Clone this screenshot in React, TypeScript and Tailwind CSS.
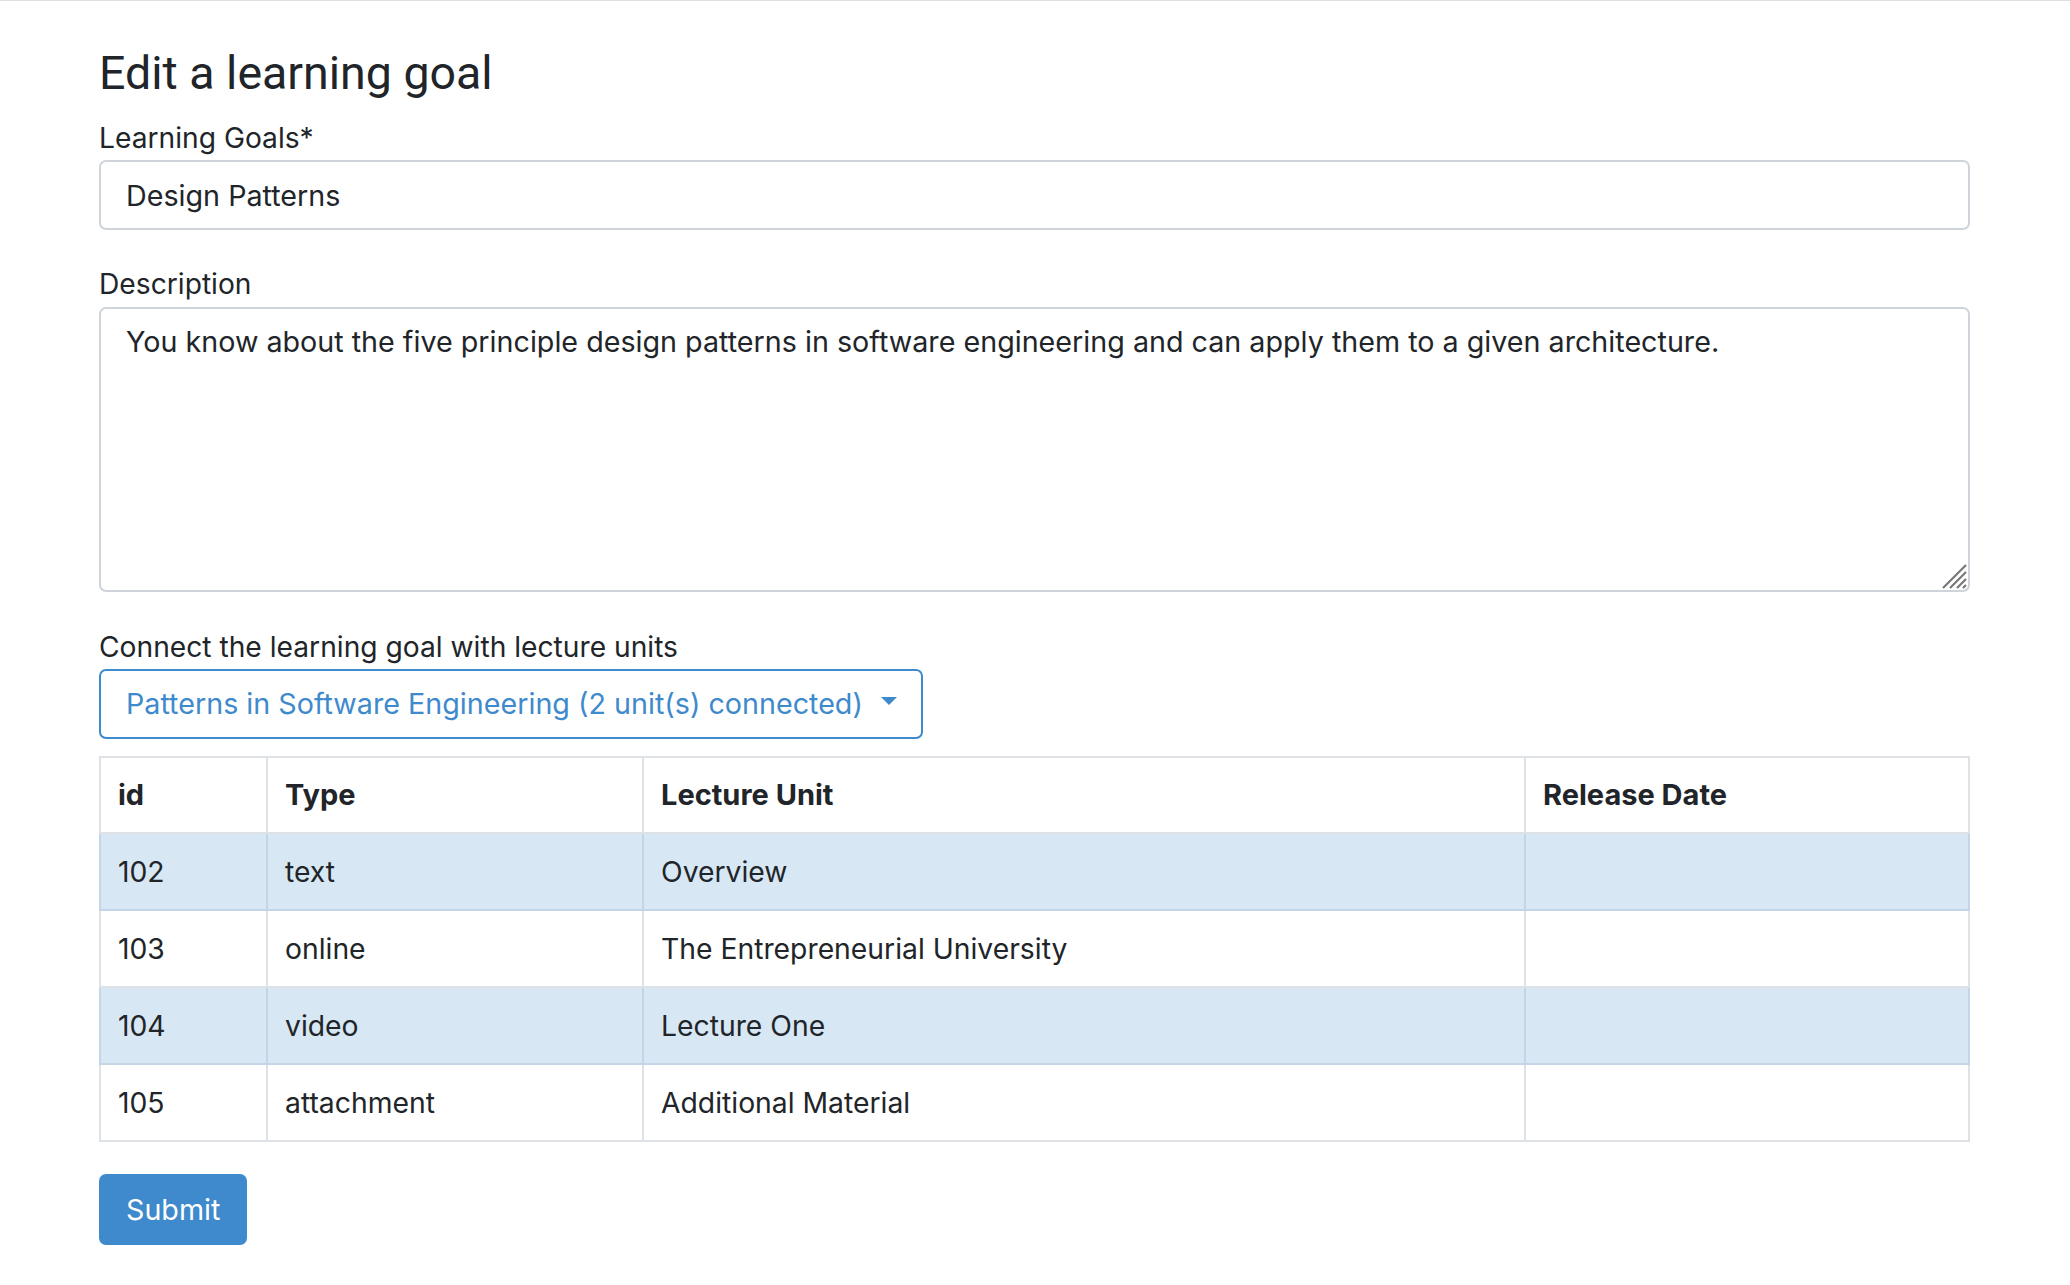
import React from "react";

const rows = [
  { id: "102", type: "text", unit: "Overview", hl: true },
  { id: "103", type: "online", unit: "The Entrepreneurial University", hl: false },
  { id: "104", type: "video", unit: "Lecture One", hl: true },
  { id: "105", type: "attachment", unit: "Additional Material", hl: false },
];

export default function App() {
  const body = { fontFamily: "Inter, 'Noto Sans', 'Liberation Sans', sans-serif" };
  return (
    <div className="min-h-[1285px] w-full bg-white border-t border-[#dcdfe3] text-[#212529]" style={body}>
      <div className="pl-[99px] pr-[100px] pt-[44px] pb-[40px]">
        <h2
          className="text-[46.5px] leading-[56px] font-normal text-[#212529]"
          style={{ fontFamily: "Roboto, 'Liberation Sans', sans-serif" }}
        >
          Edit a learning goal
        </h2>

        <label className="block mt-[19px] text-[28.2px] leading-[36px]">Learning Goals*</label>
        <input
          className="mt-[4px] block w-full h-[70px] rounded-[7px] border-2 border-[#ced4da] bg-white px-[25px] text-[28.7px] leading-[36px] text-[#212529] outline-none"
          style={body}
          defaultValue="Design Patterns"
        />

        <label className="block mt-[36px] text-[28.2px] leading-[36px]">Description</label>
        <div className="relative mt-[5px]">
          <textarea
            className="block w-full h-[285px] resize-none rounded-[7px] border-2 border-[#ced4da] bg-white px-[25px] pt-[15px] text-[28.7px] leading-[36px] text-[#212529] outline-none"
            style={body}
            defaultValue="You know about the five principle design patterns in software engineering and can apply them to a given architecture."
          />
          <svg className="absolute right-[3px] bottom-[3px]" width="26" height="26" viewBox="0 0 26 26">
            <line x1="2" y1="25" x2="25" y2="2" stroke="#777777" strokeWidth="2.2" />
            <line x1="9" y1="25" x2="25" y2="9" stroke="#777777" strokeWidth="2.2" />
            <line x1="16" y1="25" x2="25" y2="16" stroke="#777777" strokeWidth="2.2" />
            <line x1="22" y1="25" x2="25" y2="22" stroke="#777777" strokeWidth="2.2" />
          </svg>
        </div>

        <label className="block mt-[37px] text-[28.2px] leading-[36px]">Connect the learning goal with lecture units</label>
        <button
          type="button"
          className="mt-[4px] flex items-center h-[70px] rounded-[7px] border-2 border-[#3e8acc] bg-white pl-[25px] pr-[24px] text-[28.7px] leading-[36px] text-[#3e8acc]"
          style={body}
        >
          <span>Patterns in Software Engineering (2 unit(s) connected)</span>
          <svg className="ml-[18px] mt-[-6px]" width="16" height="8" viewBox="0 0 16 8">
            <polygon points="0,0 16,0 8,8" fill="#3e8acc" />
          </svg>
        </button>

        <table className="mt-[17px] w-full border-collapse text-[28.3px] leading-[36px]">
          <colgroup>
            <col className="w-[167px]" />
            <col className="w-[376px]" />
            <col className="w-[882px]" />
            <col />
          </colgroup>
          <thead>
            <tr className="h-[76px]">
              {["id", "Type", "Lecture Unit", "Release Date"].map((h) => (
                <th key={h} className="border-2 border-[#dee2e6] px-[17px] text-left text-[29px] font-bold align-middle">
                  {h}
                </th>
              ))}
            </tr>
          </thead>
          <tbody>
            {rows.map((r) => (
              <tr key={r.id} className={r.hl ? "h-[77px] bg-[#d8e7f4]" : "h-[77px] bg-white"}>
                {[r.id, r.type, r.unit, ""].map((c, i) => (
                  <td
                    key={i}
                    className={
                      r.hl
                        ? "border-2 border-[#c3d5e6] px-[17px] align-middle"
                        : "border-2 border-[#dee2e6] px-[17px] align-middle"
                    }
                  >
                    {c}
                  </td>
                ))}
              </tr>
            ))}
          </tbody>
        </table>

        <button
          type="button"
          className="mt-[32px] h-[71px] rounded-[7px] bg-[#3e8acc] px-[27px] text-[28.7px] leading-[36px] text-white"
          style={body}
        >
          Submit
        </button>
      </div>
    </div>
  );
}
